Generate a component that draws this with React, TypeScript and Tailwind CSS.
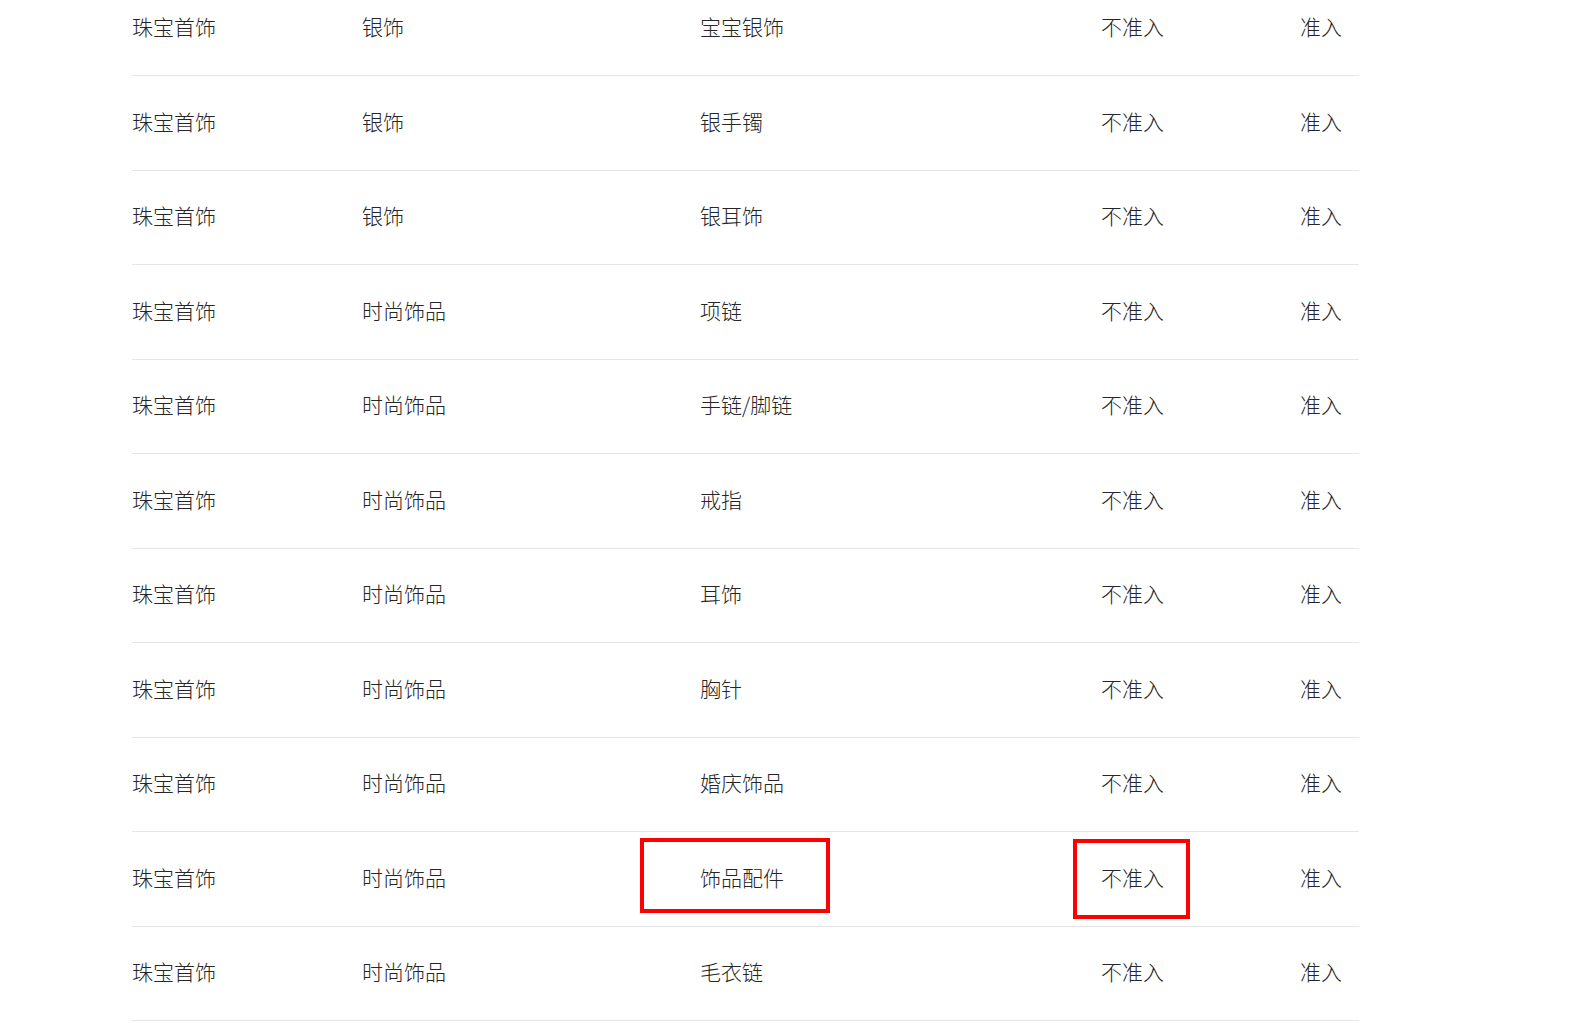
import React from "react";

const rows: [string, string, string, string, string][] = [
  ["珠宝首饰", "银饰", "宝宝银饰", "不准入", "准入"],
  ["珠宝首饰", "银饰", "银手镯", "不准入", "准入"],
  ["珠宝首饰", "银饰", "银耳饰", "不准入", "准入"],
  ["珠宝首饰", "时尚饰品", "项链", "不准入", "准入"],
  ["珠宝首饰", "时尚饰品", "手链/脚链", "不准入", "准入"],
  ["珠宝首饰", "时尚饰品", "戒指", "不准入", "准入"],
  ["珠宝首饰", "时尚饰品", "耳饰", "不准入", "准入"],
  ["珠宝首饰", "时尚饰品", "胸针", "不准入", "准入"],
  ["珠宝首饰", "时尚饰品", "婚庆饰品", "不准入", "准入"],
  ["珠宝首饰", "时尚饰品", "饰品配件", "不准入", "准入"],
  ["珠宝首饰", "时尚饰品", "毛衣链", "不准入", "准入"],
];

export default function App() {
  return (
    <div
      className="w-[1570px] h-[1023px] overflow-hidden bg-white text-[#262626]"
      style={{ fontFamily: '"Noto Sans CJK SC", "Noto Sans", sans-serif' }}
    >
      <div className="ml-[132px] w-[1227px] mt-[-18.5px]">
        {rows.map((r, i) => (
          <div
            key={i}
            className="relative grid grid-cols-[230px_338px_401px_199px_1fr] items-center h-[94.5px] border-b border-[#e6e6e6] text-[21px] leading-none font-light"
          >
            {r.map((c, j) => (
              <div key={j} className="whitespace-nowrap pb-[3px]">
                {c}
              </div>
            ))}
            {i === 9 && (
              <>
                <div className="absolute left-[508px] top-[6px] w-[190px] h-[75px] border-4 border-[#ff0000]" />
                <div className="absolute left-[941px] top-[7px] w-[117px] h-[80px] border-4 border-[#ff0000]" />
              </>
            )}
          </div>
        ))}
      </div>
    </div>
  );
}
